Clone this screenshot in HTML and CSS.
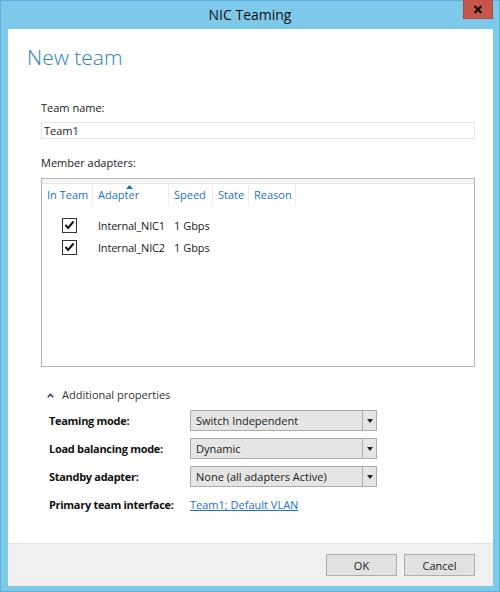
FILE: index.html
```html
<!DOCTYPE html>
<html lang="en">
<head>
    <meta charset="UTF-8">
    <meta name="viewport" content="width=device-width, initial-scale=1.0">
    <title>NIC Teaming</title>
    <link rel="stylesheet" href="styles.css">
</head>
<body>
    <div class="window">
        <div class="titlebar">
            <span></span>
            <span class="title">NIC Teaming</span>
            <button class="close" type="button">
                <svg width="10" height="9" viewBox="0 0 10 9"><path d="M1.5 1 L8.5 8 M8.5 1 L1.5 8" stroke="#111" stroke-width="2.2"/></svg>
            </button>
        </div>

        <div class="client">
            <div class="content">
                <h1>New team</h1>

                <label class="field-label" for="team_name">Team name:</label>
                <input class="text-input" type="text" id="team_name" value="Team1">

                <div class="field-label members-label">Member adapters:</div>
                <div class="adapters">
                    <div class="adapters-top"></div>
                    <div class="adapters-head">
                        <div class="col col-in">In Team</div>
                        <div class="col col-adapter">Adapter
                            <svg class="sort" width="7" height="4" viewBox="0 0 7 4"><path d="M0 4 L3.5 0 L7 4 Z" fill="#1f6fbf"/></svg>
                        </div>
                        <div class="col col-speed">Speed</div>
                        <div class="col col-state">State</div>
                        <div class="col col-reason">Reason</div>
                    </div>
                    <div class="adapter-row">
                        <div class="cell cell-in"><span class="check"><svg width="11" height="10" viewBox="0 0 11 10"><path d="M1.5 5 L4.2 8 L9.5 1.5" fill="none" stroke="#111" stroke-width="2"/></svg></span></div>
                        <div class="cell cell-adapter">Internal_NIC1</div>
                        <div class="cell cell-speed">1 Gbps</div>
                    </div>
                    <div class="adapter-row">
                        <div class="cell cell-in"><span class="check"><svg width="11" height="10" viewBox="0 0 11 10"><path d="M1.5 5 L4.2 8 L9.5 1.5" fill="none" stroke="#111" stroke-width="2"/></svg></span></div>
                        <div class="cell cell-adapter">Internal_NIC2</div>
                        <div class="cell cell-speed">1 Gbps</div>
                    </div>
                </div>

                <div class="more">
                    <svg width="7" height="5" viewBox="0 0 7 5"><path d="M0.8 4.2 L3.5 1.3 L6.2 4.2" fill="none" stroke="#333" stroke-width="1.4"/></svg>
                    <span>Additional properties</span>
                </div>

                <div class="props">
                    <div class="prop-label">Teaming mode:</div>
                    <div class="dropdown"><span class="dd-value">Switch Independent</span><span class="dd-arrow"></span></div>

                    <div class="prop-label">Load balancing mode:</div>
                    <div class="dropdown"><span class="dd-value">Dynamic</span><span class="dd-arrow"></span></div>

                    <div class="prop-label">Standby adapter:</div>
                    <div class="dropdown"><span class="dd-value">None (all adapters Active)</span><span class="dd-arrow"></span></div>

                    <div class="prop-label">Primary team interface:</div>
                    <div><a class="link" href="#">Team1; Default VLAN</a></div>
                </div>
            </div>

            <div class="footer">
                <button class="btn" type="button">OK</button>
                <button class="btn" type="button">Cancel</button>
            </div>
        </div>
    </div>
</body>
</html>
```

FILE: styles.css
```css
body {
    margin: 0;
    font-family: "Open Sans", "Noto Sans", sans-serif;
    font-size: 11px;
    color: #1a1a1a;
    background-color: #7ec8e9;
}
.window {
    width: 500px;
    height: 592px;
    box-sizing: border-box;
    border: 1px solid #5fb1dd;
    background-color: #7ec8e9;
    display: flex;
    flex-direction: column;
}
.titlebar {
    height: 28px;
    display: grid;
    grid-template-columns: 1fr auto 1fr;
    align-items: start;
}
.title {
    font-size: 14px;
    line-height: 28px;
    color: #111;
}
.close {
    justify-self: end;
    margin-right: 6px;
    width: 30px;
    height: 19px;
    margin-top: -1px;
    border: 1px solid #a84b42;
    border-top: none;
    background-color: #c7564c;
    padding: 0;
    display: flex;
    align-items: center;
    justify-content: center;
}
.client {
    margin: 0 6px 5px 7px;
    flex: 1;
    background: white;
    display: flex;
    flex-direction: column;
}
.content {
    flex: 1;
    padding: 0 18px 0 33px;
}
h1 {
    margin: 13px 0 0 -14px;
    font-size: 21px;
    font-weight: 300;
    line-height: 31px;
    color: #2a84ae;
}
.field-label {
    display: block;
    margin-top: 27px;
    line-height: 16px;
}
.text-input {
    display: block;
    box-sizing: border-box;
    width: 100%;
    height: 17px;
    margin: 6px 0 0 0;
    padding: 0 2px;
    border: 1px solid #e3e3e3;
    font-family: inherit;
    font-size: 11px;
    color: #1a1a1a;
}
.members-label {
    margin-top: 16px;
}
.adapters {
    margin-top: 7px;
    height: 189px;
    box-sizing: border-box;
    border: 1px solid #b4b4b4;
}
.adapters-top {
    height: 4px;
    border-bottom: 1px solid #e4e4e4;
    background: #f6f6f6;
}
.adapters-head {
    display: flex;
    height: 22px;
    color: #1f6fbf;
}
.col {
    position: relative;
    padding-left: 5px;
    line-height: 22px;
    border-right: 1px solid #ececec;
    box-sizing: border-box;
}
.col-in { width: 51px; }
.col-adapter { width: 76px; }
.col-speed { width: 44px; }
.col-state { width: 36px; }
.col-reason { width: 47px; }
.sort {
    position: absolute;
    left: 33px;
    top: 1px;
}
.adapter-row {
    display: flex;
    height: 22px;
    align-items: center;
}
.adapters-head + .adapter-row {
    margin-top: 8px;
}
.cell {
    box-sizing: border-box;
    padding-left: 5px;
}
.cell-in {
    width: 51px;
    padding-left: 20px;
    display: flex;
}
.cell-adapter {
    width: 76px;
    letter-spacing: -0.2px;
}
.cell-speed { width: 44px; }
.check {
    width: 15px;
    height: 15px;
    box-sizing: border-box;
    border: 1px solid #333;
    display: flex;
    align-items: center;
    justify-content: center;
}
.more {
    margin-top: 20px;
    margin-left: 6px;
    display: flex;
    align-items: center;
    gap: 8px;
    line-height: 16px;
    color: #333;
}
.props {
    margin-top: 7px;
    margin-left: 8px;
    display: grid;
    grid-template-columns: 141px 187px;
    row-gap: 7px;
    align-items: center;
}
.prop-label {
    font-weight: bold;
    letter-spacing: -0.3px;
    color: #111;
}
.dropdown {
    height: 21px;
    box-sizing: border-box;
    border: 1px solid #acacac;
    background-color: #e5e5e5;
    display: flex;
}
.dd-value {
    flex: 1;
    padding-left: 5px;
    line-height: 19px;
}
.dd-arrow {
    width: 13px;
    border-left: 1px solid #acacac;
    display: flex;
    align-items: center;
    justify-content: center;
}
.dd-arrow::after {
    content: "";
    border-left: 3px solid transparent;
    border-right: 3px solid transparent;
    border-top: 4px solid #222;
}
.link {
    color: #1a6fd0;
    text-decoration: underline;
    line-height: 21px;
}
.footer {
    height: 43px;
    box-sizing: border-box;
    border-top: 1px solid #e0e0e0;
    background-color: #f0f0f0;
    display: flex;
    justify-content: flex-end;
    align-items: center;
    gap: 7px;
    padding: 0 18px 0 0;
}
.btn {
    width: 71px;
    height: 22px;
    border: 1px solid #adadad;
    background-color: #e1e1e1;
    font-family: inherit;
    font-size: 11px;
    color: #1a1a1a;
    padding: 0;
}
```
